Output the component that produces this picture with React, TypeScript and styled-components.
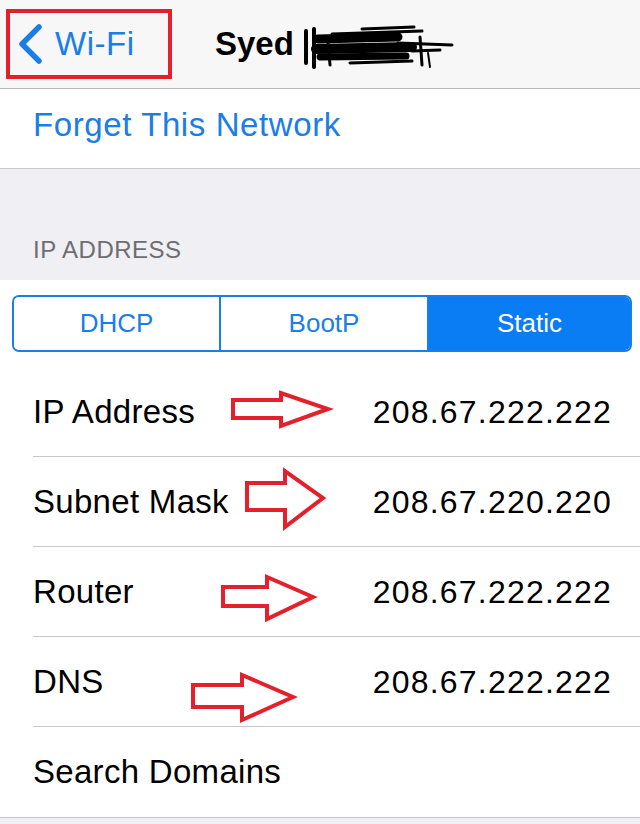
import React from 'react';
import styled, { createGlobalStyle } from 'styled-components';

const GlobalStyle = createGlobalStyle`
  html, body {
    margin: 0;
    padding: 0;
    background: #efeff4;
  }
  body {
    font-family: "Liberation Sans", Arial, sans-serif;
  }
`;

const Screen = styled.div`
  width: 640px;
  height: 824px;
  overflow: hidden;
  background: #efeff4;
  display: flex;
  flex-direction: column;
`;

const NavBar = styled.div`
  position: relative;
  height: 88px;
  flex: none;
  background: #f7f7f8;
  border-bottom: 1px solid #b9b9bd;
  display: flex;
  align-items: center;
`;

const BackButton = styled.div`
  display: flex;
  align-items: center;
  gap: 12px;
  padding-left: 17px;
  width: 215px;
  box-sizing: border-box;
  color: #1a7ee6;
  font-size: 33px;
  letter-spacing: 0.5px;
`;

const Title = styled.div`
  display: flex;
  align-items: center;
  font-size: 33px;
  font-weight: bold;
  color: #000;
  gap: 8px;
`;

const Highlight = styled.div`
  position: absolute;
  left: 6px;
  top: 9px;
  width: 166px;
  height: 70px;
  box-sizing: border-box;
  border: 4px solid #e3202b;
`;

const Group = styled.div`
  background: #fff;
  border-bottom: 1px solid #c8c7cc;
  flex: none;
`;

const ActionRow = styled.div`
  height: 79px;
  display: flex;
  align-items: center;
  padding: 0 0 8px 33px;
  box-sizing: border-box;
  color: #1a7ee6;
  font-size: 33px;
  letter-spacing: 0.6px;
`;

const SectionHeader = styled.div`
  height: 111px;
  flex: none;
  display: flex;
  align-items: flex-end;
  padding: 0 0 16px 33px;
  box-sizing: border-box;
  color: #6d6d72;
  font-size: 24px;
  letter-spacing: 0.5px;
`;

const SegmentWrap = styled.div`
  padding: 15px 8px 15px 12px;
`;

const Segments = styled.div`
  display: grid;
  grid-template-columns: 205px 208px 1fr;
  height: 57px;
  border: 2px solid #1a7ee6;
  border-radius: 7px;
  overflow: hidden;
  box-sizing: border-box;
`;

const Segment = styled.div<{ $active?: boolean }>`
  display: flex;
  align-items: center;
  justify-content: center;
  font-size: 26px;
  color: ${(p) => (p.$active ? '#fff' : '#1a7ee6')};
  background: ${(p) => (p.$active ? '#0a7cf4' : '#fff')};
  & + & {
    border-left: 2px solid #1a7ee6;
  }
`;

const Row = styled.div<{ $last?: boolean }>`
  position: relative;
  height: 90px;
  display: flex;
  align-items: center;
  justify-content: space-between;
  padding: 0 28px 0 33px;
  font-size: 33px;
  letter-spacing: 0.3px;
  color: #000;
  &::after {
    content: '';
    display: ${(p) => (p.$last ? 'none' : 'block')};
    position: absolute;
    left: 33px;
    right: 0;
    bottom: 0;
    height: 1px;
    background: #c8c7cc;
  }
`;

const Value = styled.span`
  font-size: 32px;
  letter-spacing: 1.2px;
`;

const Annotation = styled.svg`
  position: absolute;
  left: 0;
  top: 0;
  width: 640px;
  height: 90px;
  pointer-events: none;
`;

type ArrowShape = {
  x0: number;
  s1: number;
  s2: number;
  hx: number;
  h1: number;
  h2: number;
  tx: number;
  ty: number;
};

const RedArrow: React.FC<{ a: ArrowShape }> = ({ a }) => (
  <Annotation viewBox="0 0 640 90">
    <polygon
      points={`${a.x0},${a.s1} ${a.hx},${a.s1} ${a.hx},${a.h1} ${a.tx},${a.ty} ${a.hx},${a.h2} ${a.hx},${a.s2} ${a.x0},${a.s2}`}
      fill="none"
      stroke="#e3202b"
      strokeWidth={4}
      strokeLinejoin="miter"
    />
  </Annotation>
);

const Scribble = () => (
  <svg width="160" height="50" viewBox="0 0 160 50">
    <g stroke="#000" strokeLinecap="round" fill="none">
      <path d="M4 12 L4 44" strokeWidth={4} />
      <path d="M12 10 L12 48" strokeWidth={4} />
      <path d="M16 20 L96 18" strokeWidth={9} />
      <path d="M14 30 L110 28" strokeWidth={10} />
      <path d="M18 38 L104 37" strokeWidth={7} />
      <path d="M30 15 L120 12" strokeWidth={3} />
      <path d="M60 10 L112 8" strokeWidth={3} />
      <path d="M96 24 L150 26" strokeWidth={3} />
      <path d="M110 32 L138 31" strokeWidth={3} />
      <path d="M48 44 L110 42" strokeWidth={3} />
      <path d="M118 18 L120 46" strokeWidth={3} />
      <path d="M126 34 L128 48" strokeWidth={2} />
      <path d="M26 22 L28 46" strokeWidth={3} />
    </g>
  </svg>
);

const rows: { label: string; value?: string; arrow?: ArrowShape }[] = [
  { label: 'IP Address', value: '208.67.222.222', arrow: { x0: 233, s1: 33, s2: 51, hx: 281, h1: 26, h2: 59, tx: 328, ty: 42 } },
  { label: 'Subnet Mask', value: '208.67.220.220', arrow: { x0: 247, s1: 26, s2: 53, hx: 285, h1: 14, h2: 70, tx: 323, ty: 41 } },
  { label: 'Router', value: '208.67.222.222', arrow: { x0: 223, s1: 40, s2: 59, hx: 267, h1: 30, h2: 72, tx: 313, ty: 50 } },
  { label: 'DNS', value: '208.67.222.222', arrow: { x0: 193, s1: 48, s2: 70, hx: 242, h1: 38, h2: 83, tx: 293, ty: 60 } },
  { label: 'Search Domains' },
];

const App: React.FC = () => {
  return (
    <Screen>
      <GlobalStyle />
      <NavBar>
        <BackButton>
          <svg width="26" height="40" viewBox="0 0 26 40">
            <path d="M22 3 L5 20 L22 37" fill="none" stroke="#1a7ee6" strokeWidth={5.5} strokeLinecap="round" strokeLinejoin="round" />
          </svg>
          Wi-Fi
        </BackButton>
        <Title>
          Syed
          <Scribble />
        </Title>
        <Highlight />
      </NavBar>

      <Group>
        <ActionRow>Forget This Network</ActionRow>
      </Group>

      <SectionHeader>IP ADDRESS</SectionHeader>

      <Group>
        <SegmentWrap>
          <Segments>
            <Segment>DHCP</Segment>
            <Segment>BootP</Segment>
            <Segment $active>Static</Segment>
          </Segments>
        </SegmentWrap>
        {rows.map((r, i) => (
          <Row key={r.label} $last={i === rows.length - 1}>
            <span>{r.label}</span>
            {r.value && <Value>{r.value}</Value>}
            {r.arrow && <RedArrow a={r.arrow} />}
          </Row>
        ))}
      </Group>
    </Screen>
  );
};

export default App;
